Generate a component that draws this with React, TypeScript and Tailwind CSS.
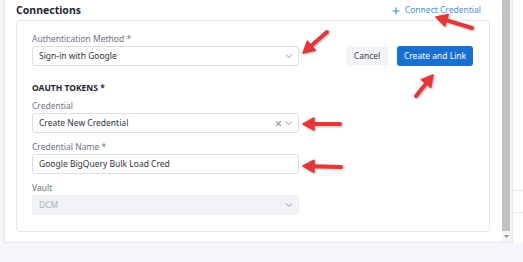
import React from 'react';

const FONT = "font-['Noto_Sans',sans-serif]";

type Pt = [number, number];

// red annotation arrows drawn on top of the screenshot
const ARROWS: { from: Pt; to: Pt }[] = [
  { from: [472, 28], to: [436, 17] },
  { from: [327, 32], to: [303, 53] },
  { from: [416, 96], to: [433, 75] },
  { from: [340, 124], to: [303, 124] },
  { from: [341, 167], to: [303, 166] },
];

function Arrow({ from, to }: { from: Pt; to: Pt }) {
  const dx = to[0] - from[0];
  const dy = to[1] - from[1];
  const len = Math.hypot(dx, dy);
  const ux = dx / len;
  const uy = dy / len;
  const headLen = 11;
  const headW = 6;
  const bx = to[0] - ux * headLen;
  const by = to[1] - uy * headLen;
  const p1 = `${to[0]},${to[1]}`;
  const p2 = `${bx - uy * headW},${by + ux * headW}`;
  const p3 = `${bx + uy * headW},${by - ux * headW}`;
  return (
    <g>
      <line x1={from[0]} y1={from[1]} x2={bx + ux * 2} y2={by + uy * 2} stroke="#e5363a" strokeWidth={4} strokeLinecap="round" />
      <polygon points={`${p1} ${p2} ${p3}`} fill="#e5363a" stroke="#e5363a" strokeWidth={1.5} strokeLinejoin="round" />
    </g>
  );
}

function Chevron() {
  return (
    <svg width="8" height="6" viewBox="0 0 8 6" className="shrink-0">
      <path d="M1 1.5 L4 4.5 L7 1.5" fill="none" stroke="#8a94a6" strokeWidth="1" />
    </svg>
  );
}

function Clear() {
  return (
    <svg width="7" height="7" viewBox="0 0 7 7" className="shrink-0">
      <path d="M1.2 1.2 L5.8 5.8 M5.8 1.2 L1.2 5.8" fill="none" stroke="#8a94a6" strokeWidth="1.1" />
    </svg>
  );
}

function Label({ text }: { text: string }) {
  return <div className="h-[14px] leading-[14px] text-[8.5px] text-[#6b7385]">{text}</div>;
}

function Field({
  value,
  select,
  clear,
  disabled,
}: {
  value: string;
  select?: boolean;
  clear?: boolean;
  disabled?: boolean;
}) {
  return (
    <div
      className={`h-[20px] w-[267px] rounded-[3px] border flex items-center pl-[6px] pr-[5px] gap-[3px] ${
        disabled ? 'bg-[#f1f3f7] border-[#eef0f4]' : 'bg-white border-[#d9dfeb]'
      }`}
    >
      <span className={`flex-1 text-[8.5px] leading-none ${disabled ? 'text-[#a9afbb]' : 'text-[#2f3440]'}`}>{value}</span>
      {clear && <Clear />}
      {select && <Chevron />}
    </div>
  );
}

export default function App() {
  return (
    <div className={`${FONT} relative w-[523px] h-[262px] bg-[#f4f6fa] overflow-hidden`}>
      <div className="flex h-[243px]">
        <div className="w-[4px] bg-[#f4f6fa]" />
        {/* panel */}
        <div className="flex w-[509px] bg-white border-l border-b border-r border-[#e4e8ef]">
          <div className="flex-1 pl-[11px] pr-[12px]">
            <div className="h-[20px] flex items-center justify-between pr-[9px] pt-[1px]">
              <span className="text-[10.5px] font-bold text-[#1e2430]">Connections</span>
              <span className="flex items-center gap-[5px] text-[8.5px] text-[#4b8fe0]">
                <svg width="8" height="8" viewBox="0 0 8 8">
                  <path d="M4 0.5 V7.5 M0.5 4 H7.5" stroke="#4b8fe0" strokeWidth="1.2" />
                </svg>
                Connect Credential
              </span>
            </div>
            {/* card */}
            <div className="h-[212px] rounded-[4px] border border-[#e3e7ef] pl-[15px] pt-[11px]">
              <div className="flex items-end">
                <div>
                  <Label text="Authentication Method *" />
                  <Field value="Sign-in with Google" select />
                </div>
                <div className="flex gap-[9px] ml-[47px]">
                  <button className="h-[20px] w-[42px] rounded-[3px] bg-[#f3f5f8] text-[8.5px] text-[#3b4150]">Cancel</button>
                  <button className="h-[20px] w-[76px] rounded-[3px] bg-[#1a6fd3] text-[8.5px] text-white">Create and Link</button>
                </div>
              </div>
              <div className="mt-[15px] h-[14px] leading-[14px] text-[8.5px] font-bold text-[#1e2430]">OAUTH TOKENS *</div>
              <div className="mt-[4px]">
                <Label text="Credential" />
                <Field value="Create New Credential" select clear />
              </div>
              <div className="mt-[7px]">
                <Label text="Credential Name *" />
                <Field value="Google BigQuery Bulk Load Cred" />
              </div>
              <div className="mt-[7px]">
                <Label text="Vault" />
                <Field value="DCM" select disabled />
              </div>
            </div>
          </div>
          {/* scrollbar */}
          <div className="w-[10px] flex flex-col bg-[#f5f5f5]">
            <div className="h-[231px] w-[8px] bg-[#c1c1c1]" />
            <div className="flex-1 flex items-center justify-center pr-[2px]">
              <svg width="5" height="3" viewBox="0 0 5 3">
                <path d="M0 0 H5 L2.5 3 Z" fill="#8d8d8d" />
              </svg>
            </div>
          </div>
        </div>
        {/* page behind the panel */}
        <div className="flex-1 bg-white flex flex-col">
          <div className="h-[190px]" />
          <div className="h-[23px] border-t border-b border-[#e6eaf1]" />
          <div className="flex-1" />
        </div>
      </div>
      <svg className="absolute inset-0 pointer-events-none [filter:drop-shadow(1px_1px_1px_rgba(0,0,0,0.3))]" width="523" height="262">
        {ARROWS.map((a, i) => (
          <Arrow key={i} from={a.from} to={a.to} />
        ))}
      </svg>
    </div>
  );
}
